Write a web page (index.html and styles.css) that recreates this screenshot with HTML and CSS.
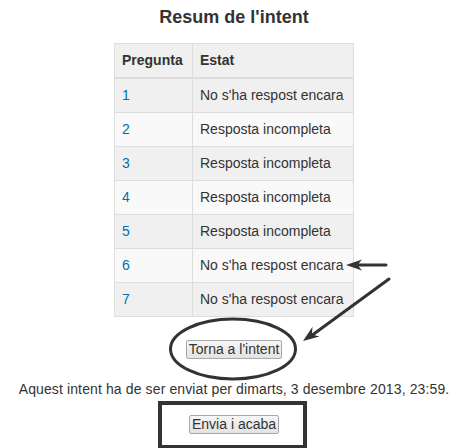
FILE: index.html
```html
<!DOCTYPE html>
<html lang="ca">
<head>
<meta charset="utf-8">
<title>Resum de l'intent</title>
<link rel="stylesheet" href="styles.css">
</head>
<body>
<div class="page">
  <h2 class="title">Resum de l'intent</h2>
  <table class="summary">
    <thead>
      <tr><th class="c0">Pregunta</th><th class="c1">Estat</th></tr>
    </thead>
    <tbody>
      <tr class="odd"><td class="c0"><a href="#">1</a></td><td class="c1">No s'ha respost encara</td></tr>
      <tr class="even"><td class="c0"><a href="#">2</a></td><td class="c1">Resposta incompleta</td></tr>
      <tr class="odd"><td class="c0"><a href="#">3</a></td><td class="c1">Resposta incompleta</td></tr>
      <tr class="even"><td class="c0"><a href="#">4</a></td><td class="c1">Resposta incompleta</td></tr>
      <tr class="odd"><td class="c0"><a href="#">5</a></td><td class="c1">Resposta incompleta</td></tr>
      <tr class="even"><td class="c0"><a href="#">6</a></td><td class="c1">No s'ha respost encara</td></tr>
      <tr class="odd"><td class="c0"><a href="#">7</a></td><td class="c1">No s'ha respost encara</td></tr>
    </tbody>
  </table>
  <div class="controls">
    <button class="btn btn-return" type="button">Torna a l'intent</button>
  </div>
  <p class="due">Aquest intent ha de ser enviat per dimarts, 3 desembre 2013, 23:59.</p>
  <div class="controls">
    <button class="btn btn-submit" type="button">Envia i acaba</button>
  </div>
</div>
<svg class="annotations" width="476" height="448" viewBox="0 0 476 448" aria-hidden="true">
  <g fill="none" stroke="#333" stroke-linecap="round">
    <ellipse cx="233" cy="349" rx="62.5" ry="30" stroke-width="3"/>
    <line x1="386" y1="265" x2="356" y2="265" stroke-width="3"/>
    <line x1="389" y1="279" x2="311" y2="336" stroke-width="3"/>
    <rect x="160" y="403" width="145" height="44" stroke-width="4" stroke-linecap="butt"/>
  </g>
  <g fill="#333">
    <polygon points="346,265 362,259.5 357.5,265 362,270.5"/>
    <polygon points="303,341 312.5,326.7 311.9,334.6 319.5,336.5"/>
  </g>
</svg>
</body>
</html>
```
FILE: styles.css
```css
html, body {
  margin: 0;
  padding: 0;
  background: #fff;
  overflow: hidden;
}

body {
  width: 476px;
  height: 448px;
  position: relative;
  font-family: "Liberation Sans", Arial, sans-serif;
  font-size: 14px;
  color: #333;
}

.page {
  width: 468px;
  display: flex;
  flex-direction: column;
  align-items: center;
}

.title {
  margin: 0;
  padding-top: 6px;
  font-size: 18px;
  line-height: 22px;
  font-weight: bold;
  color: #333;
  text-align: center;
}

.summary {
  margin-top: 15px;
  border-collapse: collapse;
  font-size: 14px;
  line-height: 17px;
}

.summary th,
.summary td {
  border: 1px solid #ddd;
  padding: 8px 8px 8px 7px;
  text-align: left;
  vertical-align: top;
}

.summary th {
  background: #f0f0f0;
  font-weight: bold;
  border-bottom: 2px solid #ddd;
}

.summary .c0 {
  width: 62px;
}

.summary .c1 {
  width: 145px;
}

.summary tr.odd td {
  background: #f0f0f0;
}

.summary tr.even td {
  background: #f9f9f9;
}

.summary a {
  color: #0070a8;
  text-decoration: none;
}

.controls {
  display: flex;
  justify-content: center;
}

.btn {
  font-family: "Liberation Sans", Arial, sans-serif;
  font-size: 14px;
  line-height: 15px;
  color: #333;
  padding: 1px 1.5px;
  border: 1px solid #a8a8a8;
  border-radius: 2px;
  background: linear-gradient(#f6f6f6, #e3e3e3);
  margin: 0;
}

.btn-return {
  margin-top: 23px;
}

.due {
  margin: 22px 0 0;
  line-height: 17px;
  letter-spacing: 0.12px;
  text-align: center;
}

.btn-submit {
  margin-top: 17px;
}

.annotations {
  position: absolute;
  left: 0;
  top: 0;
  pointer-events: none;
}
```
